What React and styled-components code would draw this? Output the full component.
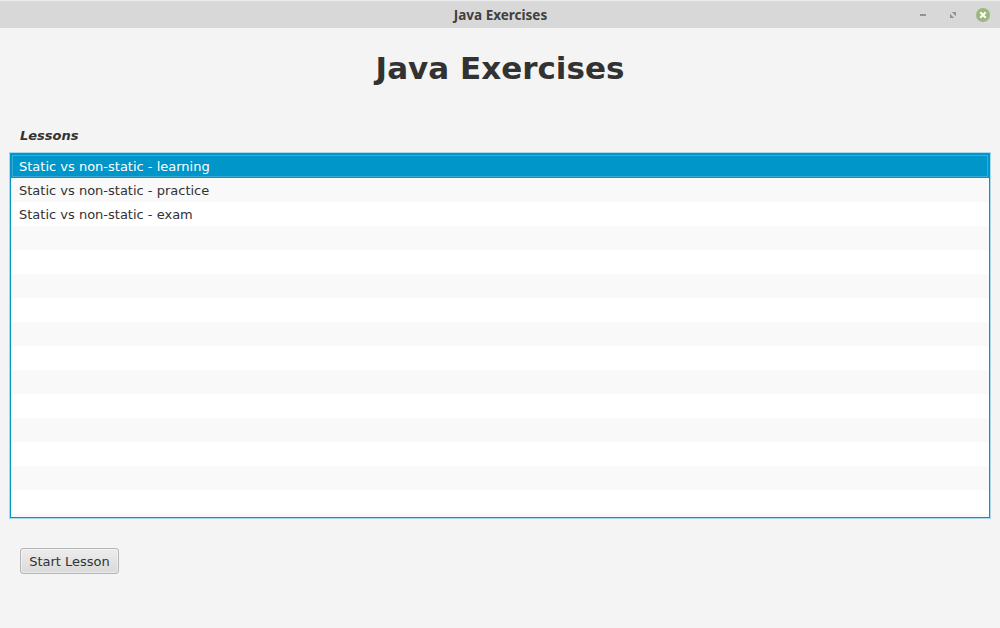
import React from "react";
import styled, { createGlobalStyle } from "styled-components";

const GlobalStyle = createGlobalStyle`
  * { box-sizing: border-box; }
  body { margin: 0; background: #f4f4f4; }
`;

const Window = styled.div`
  display: flex;
  flex-direction: column;
  height: 628px;
  background: #f4f4f4;
  color: #323232;
  font: 13px/26px "DejaVu Sans", sans-serif;
  overflow: hidden;
`;

const TitleBar = styled.header`
  display: grid;
  grid-template-columns: 1fr auto 1fr;
  align-items: center;
  height: 28px;
  padding: 0 9px 0 0;
  background: #d8d8d8;
  border-top: 1px solid #ececec;
  flex: none;
`;

const WindowTitle = styled.span`
  grid-column: 2;
  margin-left: 10px;
  color: #404040;
  font: bold 13.5px/20px "Noto Sans", sans-serif;
`;

const Controls = styled.div`
  display: flex;
  justify-content: flex-end;
  gap: 14px;
`;

const ControlIcon = styled.svg`
  display: block;
  width: 16px;
  height: 16px;
`;

const Content = styled.main`
  display: flex;
  flex-direction: column;
  padding: 20px 10px 0;
`;

const Heading = styled.h1`
  margin: 0;
  font-size: 31px;
  line-height: 41px;
  font-weight: bold;
  text-align: center;
`;

const SectionLabel = styled.h2`
  margin: 34px 0 0;
  padding-left: 10px;
  font-size: 13px;
  line-height: 26px;
  font-style: italic;
  font-weight: bold;
`;

const LessonList = styled.ul`
  list-style: none;
  margin: 4px 0 0;
  padding: 0;
  height: 365px;
  overflow: hidden;
  background: #fff;
  border: 1px solid #0096c9;
  box-shadow: 0 0 0 1px #a9d9ea;
`;

const LessonRow = styled.li`
  height: 24px;
  padding: 0 8px;
  white-space: pre;
  background: ${(p) => (p.$selected ? "#0096c9" : p.$striped ? "#f9f9f9" : "#fff")};
  color: ${(p) => (p.$selected ? "#fff" : "#323232")};
  outline: ${(p) => (p.$selected ? "1px solid #38acd4" : "none")};
  outline-offset: -2px;
`;

const StartButton = styled.button`
  align-self: flex-start;
  margin: 30px 0 0 10px;
  width: 99px;
  height: 26px;
  padding: 1px 0 0;
  border: 1px solid #b5b5b5;
  border-radius: 3px;
  background: linear-gradient(#ededed, #dadada);
  box-shadow: inset 0 0 0 1px rgba(255, 255, 255, 0.4);
  color: #323232;
  font: 13px/23px "DejaVu Sans", sans-serif;
`;

const lessons = [
  "Static vs non-static - learning",
  "Static vs non-static - practice",
  "Static vs non-static - exam",
];
const rows = Array.from({ length: 16 }, (_, i) => lessons[i] || "");

export default function App() {
  return (
    <Window>
      <GlobalStyle />
      <TitleBar>
        <WindowTitle>Java Exercises</WindowTitle>
        <Controls>
          <ControlIcon viewBox="0 0 16 16">
            <rect x="5" y="7" width="6" height="2" fill="#929292" />
          </ControlIcon>
          <ControlIcon viewBox="0 0 16 16">
            <path d="M6.8 5H11v4.2zM5 6.8V11h4.2z" fill="#929292" />
          </ControlIcon>
          <ControlIcon viewBox="0 0 16 16">
            <circle cx="8" cy="8" r="7" fill="#9ab87c" />
            <path d="M5.3 5.3l5.4 5.4M10.7 5.3l-5.4 5.4" stroke="#fff" strokeWidth="2" />
          </ControlIcon>
        </Controls>
      </TitleBar>
      <Content>
        <Heading>Java Exercises</Heading>
        <SectionLabel>Lessons</SectionLabel>
        <LessonList>
          {rows.map((name, i) => (
            <LessonRow key={i} $selected={i === 0} $striped={i % 2 === 1}>
              {name}
            </LessonRow>
          ))}
        </LessonList>
        <StartButton>Start Lesson</StartButton>
      </Content>
    </Window>
  );
}
